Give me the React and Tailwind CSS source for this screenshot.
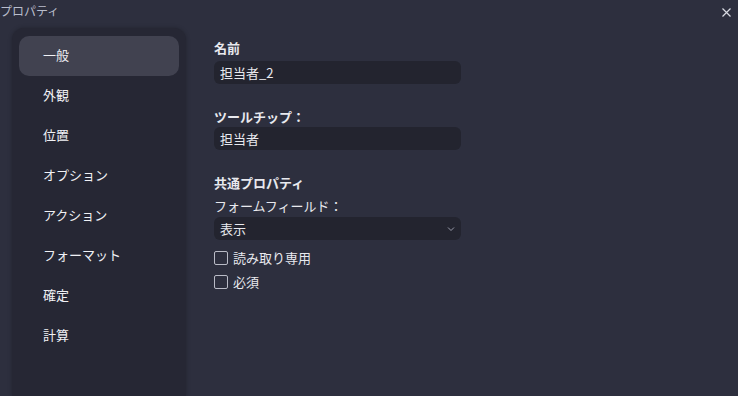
import { useState } from "react";

const font = { fontFamily: '"Noto Sans CJK JP", "Noto Sans", sans-serif' };

const tabs = ["一般", "外観", "位置", "オプション", "アクション", "フォーマット", "確定", "計算"];

export default function App() {
  const [active, setActive] = useState(0);
  const [readOnly, setReadOnly] = useState(false);
  const [required, setRequired] = useState(false);

  return (
    <div className="w-[738px] h-[396px] bg-[#2d2f3e] text-[#e8e9ee] overflow-hidden flex flex-col" style={font}>
      {/* title bar */}
      <div className="h-[28px] flex items-start justify-between shrink-0">
        <span className="text-[12px] leading-[24px] text-[#b9bdcc] -mt-[1px]">プロパティ</span>
        <button className="w-[16px] h-[16px] mt-[4px] mr-[4px] flex items-center justify-center text-[#d8dae2]">
          <svg width="9" height="9" viewBox="0 0 9 9" stroke="currentColor" strokeWidth="1.2">
            <path d="M0.5 0.5 L8.5 8.5 M8.5 0.5 L0.5 8.5" />
          </svg>
        </button>
      </div>

      <div className="flex flex-1 min-h-0">
        {/* sidebar */}
        <div className="ml-[12px] w-[174px] bg-[#262734] rounded-t-[12px] shadow-[0_0_4px_rgba(0,0,0,0.25)] px-[7px] pt-[8px] flex flex-col">
          {tabs.map((t, i) => (
            <button
              key={t}
              onClick={() => setActive(i)}
              className={
                "h-[40px] shrink-0 rounded-[10px] text-left pl-[24px] pb-[2px] text-[13px] text-[#f0f1f5] " +
                (i === active ? "bg-[#414250]" : "")
              }
            >
              {t}
            </button>
          ))}
        </div>

        {/* content */}
        <div className="flex-1 pl-[28px] pt-[10px]">
          <div className="w-[247px]">
            <div className="text-[13px] font-bold leading-[20px]">名前</div>
            <div className="mt-[3px] h-[23px] rounded-[6px] bg-[#23242f] flex items-center px-[6px] text-[13px]">担当者_2</div>

            <div className="mt-[23px] text-[13px] font-bold leading-[20px]">ツールチップ：</div>
            <div className="mt-[0px] h-[23px] rounded-[6px] bg-[#23242f] flex items-center px-[6px] text-[13px]">担当者</div>

            <div className="mt-[23px] text-[13px] font-bold leading-[20px]">共通プロパティ</div>
            <div className="mt-[3px] text-[13px] leading-[20px]">フォームフィールド：</div>
            <div className="mt-[1px] h-[23px] rounded-[6px] bg-[#23242f] flex items-center justify-between px-[6px] text-[13px]">
              <span>表示</span>
              <svg width="8" height="6" viewBox="0 0 8 6" fill="none" stroke="#9a9cab" strokeWidth="1">
                <path d="M1 1.5 L4 4.5 L7 1.5" />
              </svg>
            </div>

            <label className="mt-[9px] flex items-center gap-[5px] text-[13px] leading-[18px] cursor-pointer" onClick={() => setReadOnly(!readOnly)}>
              <span className="w-[14px] h-[14px] rounded-[2px] border border-[#b9bbc6]"></span>
              読み取り専用
            </label>
            <label className="mt-[6px] flex items-center gap-[5px] text-[13px] leading-[18px] cursor-pointer" onClick={() => setRequired(!required)}>
              <span className="w-[14px] h-[14px] rounded-[2px] border border-[#b9bbc6]"></span>
              必須
            </label>
          </div>
        </div>
      </div>
    </div>
  );
}
